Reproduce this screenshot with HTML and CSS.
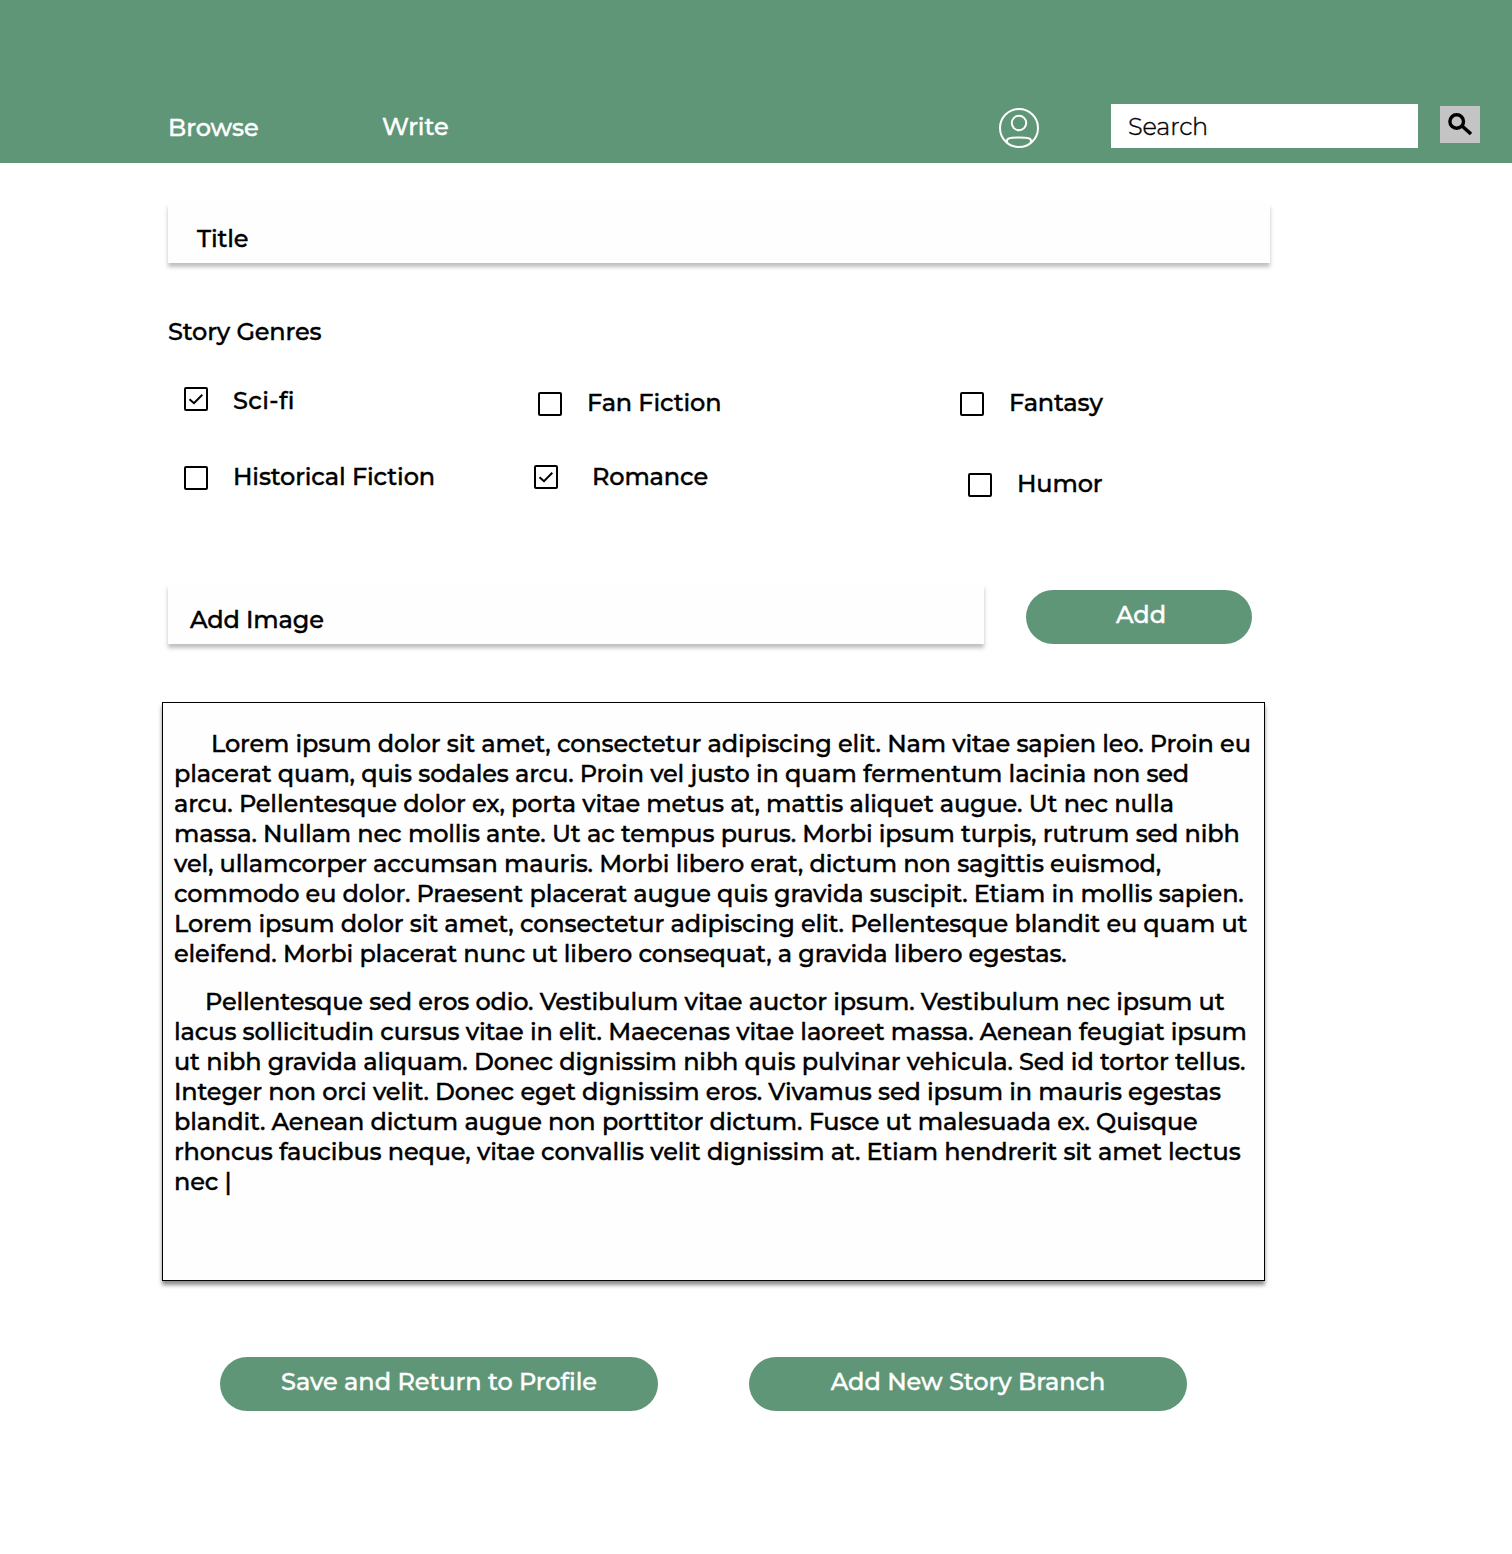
FILE: index.html
```html
<!DOCTYPE html>
<html lang="en">
<head>
<meta charset="utf-8">
<title>Write a story</title>
<link rel="stylesheet" href="styles.css">
</head>
<body>
<header class="header">
  <nav class="nav"><a class="browse">Browse</a><a class="write">Write</a></nav>
  <svg class="profile" width="42" height="42" viewBox="0 0 42 42" fill="none" stroke="#fff" stroke-width="2"><circle cx="21" cy="21" r="19"/><circle cx="21" cy="16" r="7.2"/><path d="M9.5 36C7.4 31.4 11 30.4 21 30.4S34.6 31.4 32.5 36"/></svg>
  <div class="search">Search</div>
  <button class="search-button" aria-label="Search"><svg width="40" height="37" viewBox="0 0 40 37" fill="none" stroke="#000"><circle cx="16.7" cy="15.5" r="6.8" stroke-width="3.4"/><path d="M21.5 19.5L31 28" stroke-width="3.6"/></svg></button>
</header>
<main class="main">
  <div class="field title">Title</div>
  <h2 class="heading">Story Genres</h2>
  <section class="genres">
    <div class="column first">
      <label class="genre scifi"><svg class="box" viewBox="0 0 24 24"><rect x="1" y="1" width="22" height="22" rx="1"/><path d="M5.5 12.2L10 16.2L18.3 7.7"/></svg><span>Sci-fi</span></label>
      <label class="genre historical"><svg class="box" viewBox="0 0 24 24"><rect x="1" y="1" width="22" height="22" rx="1"/></svg><span>Historical Fiction</span></label>
    </div>
    <div class="column second">
      <label class="genre fan"><svg class="box" viewBox="0 0 24 24"><rect x="1" y="1" width="22" height="22" rx="1"/></svg><span>Fan Fiction</span></label>
      <label class="genre romance"><svg class="box" viewBox="0 0 24 24"><rect x="1" y="1" width="22" height="22" rx="1"/><path d="M5.5 12.2L10 16.2L18.3 7.7"/></svg><span>Romance</span></label>
    </div>
    <div class="column third">
      <label class="genre fantasy"><svg class="box" viewBox="0 0 24 24"><rect x="1" y="1" width="22" height="22" rx="1"/></svg><span>Fantasy</span></label>
      <label class="genre humor"><svg class="box" viewBox="0 0 24 24"><rect x="1" y="1" width="22" height="22" rx="1"/></svg><span>Humor</span></label>
    </div>
  </section>
  <section class="image-row">
    <div class="field image">Add Image</div>
    <button class="button add">Add</button>
  </section>
  <section class="editor">
    <p class="opening">Lorem ipsum dolor sit amet, consectetur adipiscing elit. Nam vitae sapien leo. Proin eu<br>
      placerat quam, quis sodales arcu. Proin vel justo in quam fermentum lacinia non sed<br>
      arcu. Pellentesque dolor ex, porta vitae metus at, mattis aliquet augue. Ut nec nulla<br>
      massa. Nullam nec mollis ante. Ut ac tempus purus. Morbi ipsum turpis, rutrum sed nibh<br>
      vel, ullamcorper accumsan mauris. Morbi libero erat, dictum non sagittis euismod,<br>
      commodo eu dolor. Praesent placerat augue quis gravida suscipit. Etiam in mollis sapien.<br>
      Lorem ipsum dolor sit amet, consectetur adipiscing elit. Pellentesque blandit eu quam ut<br>
      eleifend. Morbi placerat nunc ut libero consequat, a gravida libero egestas.</p>
    <p class="closing">Pellentesque sed eros odio. Vestibulum vitae auctor ipsum. Vestibulum nec ipsum ut<br>
      lacus sollicitudin cursus vitae in elit. Maecenas vitae laoreet massa. Aenean feugiat ipsum<br>
      ut nibh gravida aliquam. Donec dignissim nibh quis pulvinar vehicula. Sed id tortor tellus.<br>
      Integer non orci velit. Donec eget dignissim eros. Vivamus sed ipsum in mauris egestas<br>
      blandit. Aenean dictum augue non porttitor dictum. Fusce ut malesuada ex. Quisque<br>
      rhoncus faucibus neque, vitae convallis velit dignissim at. Etiam hendrerit sit amet lectus<br>
      nec |</p>
  </section>
  <div class="actions"><button class="button wide">Save and Return to Profile</button><button class="button wide">Add New Story Branch</button></div>
</main>
</body>
</html>
```
FILE: styles.css
```css
*{box-sizing:border-box}
body{margin:0;width:1512px;min-height:1554px;background:#fff;color:#000;font:500 24px/30px Montserrat,Inter,sans-serif;-webkit-text-stroke:.4px}
h2,p{margin:0;font:inherit}
button{border:0;padding:0;font:inherit;color:inherit}
svg{display:block;flex:none}

.header{display:flex;align-items:flex-start;height:163px;padding:104px 32px 0 168px;background:#5f9677;color:#fff}
.nav{display:flex;width:830px}
.browse{width:214px;padding-top:9px}
.write{padding-top:8px}
.profile{margin-top:3px}
.search{width:307px;height:44px;margin-left:71px;padding:8px 17px;background:#fff;color:#000;font-weight:300;letter-spacing:-.14px}
.search-button{width:40px;height:37px;margin:2px 0 0 22px;background:#c4c4c4}

.main{padding:40px 0 0 168px;letter-spacing:-.145px}
.field{height:60px;background:#fefefe;box-shadow:0 4px 4px rgba(0,0,0,.25)}
.title{width:1102px;padding:21px 29px}
.heading{margin-top:54px;height:30px}

.genres{display:flex;height:162px;margin-top:40px;padding-left:16px}
.column{display:flex;flex-direction:column}
.first{width:350px}
.second{width:426px}
.genre{display:flex;gap:25px;height:24px;white-space:nowrap}
.genre span{margin-top:-4px}
.scifi span{margin-top:-1px;letter-spacing:.4px}
.romance span{margin-top:-3px}
.box{width:24px;height:24px;fill:none;stroke:#000;stroke-width:2}
.historical{margin-top:55px}
.fan{margin:5px 0 0 4px}
.romance{margin-top:49px;gap:34px}
.fantasy{margin-top:5px}
.humor{margin:57px 0 0 8px}

.image-row{display:flex;margin-top:35px;gap:42px}
.image{width:816px;padding:21px 22px}
.button{display:flex;justify-content:center;height:54px;padding-top:10px;border-radius:27px;background:#5f9677;color:#fff;letter-spacing:-.04px}
.add{width:226px;margin-top:6px;padding-left:4px}

.editor{width:1103px;height:579px;margin:58px 0 0 -6px;padding:26px 0 0 11px;border:1px solid #000;background:#fefefe;box-shadow:0 4px 4px rgba(0,0,0,.45);white-space:nowrap}
.opening{text-indent:37px}
.closing{margin-top:18px;text-indent:31px}

.actions{display:flex;gap:91px;margin:76px 0 0 52px}
.wide{width:438px}
```
